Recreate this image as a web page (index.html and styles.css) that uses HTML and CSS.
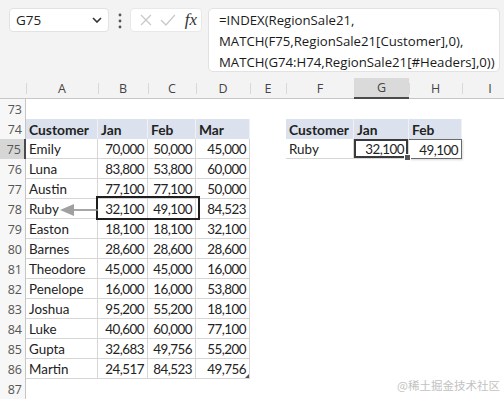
FILE: index.html
```html
<!DOCTYPE html>
<html lang="en">
<head>
    <meta charset="UTF-8">
    <title>INDEX MATCH</title>
    <link rel="stylesheet" href="styles.css">
</head>
<body>
    <div class="toolbar">
        <div class="name-box">
            <span>G75</span>
            <svg class="chevron" width="10" height="6" viewBox="0 0 10 6"><path d="M1 1 L5 5 L9 1" fill="none" stroke="#333" stroke-width="1.6"/></svg>
        </div>
        <svg class="kebab" width="4" height="16" viewBox="0 0 4 16">
            <circle cx="2" cy="2" r="1.4" fill="#555"/>
            <circle cx="2" cy="8" r="1.4" fill="#555"/>
            <circle cx="2" cy="14" r="1.4" fill="#555"/>
        </svg>
        <div class="fx-box">
            <svg width="12" height="12" viewBox="0 0 12 12"><path d="M1 1 L11 11 M11 1 L1 11" stroke="#c9c9c9" stroke-width="1.3"/></svg>
            <svg width="16" height="12" viewBox="0 0 16 12"><path d="M1 6 L6 11 L15 1" fill="none" stroke="#c9c9c9" stroke-width="1.3"/></svg>
            <span class="fx">fx</span>
        </div>
        <div class="formula">=INDEX(RegionSale21,<br>MATCH(F75,RegionSale21[Customer],0),<br>MATCH(G74:H74,RegionSale21[#Headers],0))</div>
    </div>

    <div class="sheet" id="sheet">
        <div class="range-box"></div>
        <svg class="tracer" width="40" height="14" viewBox="0 0 40 14">
            <line x1="12" y1="7" x2="38" y2="7" stroke="#8a8a8a" stroke-width="1.5"/>
            <polygon points="0,7 14,1 14,13" fill="#a0a0a0"/>
        </svg>
    </div>

    <div class="watermark">@稀土掘金技术社区</div>

    <script>
        const cols = ['A', 'B', 'C', 'D', 'E', 'F', 'G', 'H', 'I'];
        const data = {
            74: ['Customer', 'Jan', 'Feb', 'Mar', '', 'Customer', 'Jan', 'Feb', ''],
            75: ['Emily', '70,000', '50,000', '45,000', '', 'Ruby', '32,100', '49,100', ''],
            76: ['Luna', '83,800', '53,800', '60,000'],
            77: ['Austin', '77,100', '77,100', '50,000'],
            78: ['Ruby', '32,100', '49,100', '84,523'],
            79: ['Easton', '18,100', '18,100', '32,100'],
            80: ['Barnes', '28,600', '28,600', '28,600'],
            81: ['Theodore', '45,000', '45,000', '16,000'],
            82: ['Penelope', '16,000', '16,000', '53,800'],
            83: ['Joshua', '95,200', '55,200', '18,100'],
            84: ['Luke', '40,600', '60,000', '77,100'],
            85: ['Gupta', '32,683', '49,756', '55,200'],
            86: ['Martin', '24,517', '84,523', '49,756']
        };

        function cellClass(row, c) {
            let cls = 'cell';
            if (row === 74 && (c < 4 || (c > 4 && c < 8))) cls += ' hd';
            if (row >= 75 && row <= 86 && c < 4) cls += ' tb';
            if (row === 75 && c > 4 && c < 8) cls += ' tb';
            if (row === 75 && c === 6) cls += ' sel';
            if (row === 75 && c === 7) cls += ' spill';
            if (row === 86 && c === 3) cls += ' resize';
            return cls;
        }

        function renderSheet() {
            const sheet = document.getElementById('sheet');
            let html = '<div class="corner"></div>';
            cols.forEach(col => {
                html += '<div class="col-head' + (col === 'G' ? ' active' : '') + '">' + col + '</div>';
            });
            for (let row = 73; row <= 87; row++) {
                html += '<div class="row-head' + (row === 75 ? ' active' : '') + '">' + row + '</div>';
                const values = data[row] || [];
                cols.forEach((col, c) => {
                    const value = values[c] || '';
                    let cls = cellClass(row, c);
                    if (/^[\d,]+$/.test(value)) cls += ' num';
                    html += '<div class="' + cls + '">' + value + '</div>';
                });
            }
            sheet.insertAdjacentHTML('afterbegin', html);
        }

        renderSheet();
    </script>
</body>
</html>
```

FILE: styles.css
```css
body {
    margin: 0;
    width: 504px;
    height: 401px;
    overflow: hidden;
    background-color: #ffffff;
    font-family: "Open Sans", "Noto Sans", sans-serif;
    color: #222;
    position: relative;
}

.toolbar {
    height: 78px;
    box-sizing: border-box;
    background-color: #f3f3f3;
    display: flex;
    align-items: flex-start;
    padding: 8px 4px 0 9px;
}

.name-box {
    width: 100px;
    height: 24px;
    box-sizing: border-box;
    background-color: #fff;
    border: 1px solid #e2e2e2;
    border-radius: 4px;
    display: flex;
    align-items: center;
    justify-content: space-between;
    padding: 0 6px 0 6px;
    font-size: 13.5px;
}

.kebab {
    margin: 5px 8px 0 9px;
}

.fx-box {
    width: 72px;
    height: 24px;
    box-sizing: border-box;
    background-color: #fff;
    border: 1px solid #e8e8e8;
    border-radius: 4px;
    display: flex;
    align-items: center;
    gap: 8px;
    padding: 0 4px 0 9px;
}

.fx {
    font-family: "Liberation Serif", serif;
    font-style: italic;
    font-size: 17px;
    color: #333;
    margin-left: 1px;
}

.formula {
    margin-left: 6px;
    flex: 1;
    height: 64px;
    box-sizing: border-box;
    background-color: #fff;
    border: 1px solid #e2e2e2;
    border-radius: 5px;
    padding: 1px 0 0 10px;
    font-size: 13.2px;
    line-height: 21px;
    color: #1a1a1a;
    white-space: nowrap;
}

.sheet {
    position: relative;
    display: grid;
    grid-template-columns: 26px 72px 50px 48px 54px 36px 68px 55px 53px 56px;
    grid-template-rows: 21px repeat(15, 20px);
    font-family: "Lato", sans-serif;
    font-size: 13.4px;
}

.corner, .col-head {
    background-color: #f3f3f3;
    border-bottom: 1px solid #c6c6c6;
}

.col-head {
    display: flex;
    align-items: center;
    justify-content: center;
    font-family: "Open Sans", sans-serif;
    font-size: 12.5px;
    color: #444;
    position: relative;
}

.col-head::before {
    content: "";
    position: absolute;
    left: 0;
    top: 5px;
    bottom: 4px;
    border-left: 1px solid #d8d8d8;
}

.col-head.active {
    background-color: #dadada;
    border-bottom: 2px solid #4a4a4a;
}

.row-head {
    background-color: #f7f7f7;
    border-right: 1px solid #c6c6c6;
    display: flex;
    align-items: center;
    justify-content: flex-end;
    padding-right: 3px;
    font-family: "Open Sans", sans-serif;
    font-size: 12.5px;
    color: #555;
}

.row-head.active {
    background-color: #d6d6d6;
    border-right: 2px solid #4a4a4a;
}

.cell {
    display: flex;
    align-items: center;
    padding: 1px 3px 0 3px;
    white-space: nowrap;
    overflow: visible;
    box-sizing: border-box;
}

.num {
    justify-content: flex-end;
    letter-spacing: -0.5px;
}

.hd {
    background-color: #dbe2ee;
    font-weight: bold;
    font-size: 13.8px;
    border-right: 1px solid #eef1f6;
}

.tb {
    border-right: 1px solid #d6d6d6;
    border-bottom: 1px solid #d6d6d6;
}

.sel {
    position: relative;
    box-shadow: inset 0 0 0 2px #3a3a3a;
    padding-right: 4px;
}

.sel::after {
    content: "";
    position: absolute;
    right: -3px;
    bottom: -3px;
    width: 5px;
    height: 5px;
    background-color: #555;
    border: 1px solid #fff;
}

.spill {
    border: 1px solid #6a6a6a;
    border-left: none;
    box-shadow: 1px 1px 2px rgba(0, 0, 0, 0.15);
}

.resize {
    position: relative;
}

.resize::after {
    content: "";
    position: absolute;
    right: 0;
    bottom: 0;
    border-left: 4px solid transparent;
    border-bottom: 4px solid #555;
}

.range-box {
    position: absolute;
    left: 96px;
    top: 118px;
    width: 104px;
    height: 24px;
    box-sizing: border-box;
    border: 2px solid #1e1e1e;
}

.tracer {
    position: absolute;
    left: 60px;
    top: 125px;
}

.watermark {
    position: absolute;
    right: 4px;
    bottom: 8px;
    font-family: "Noto Sans CJK SC", sans-serif;
    font-size: 11.5px;
    color: #c2c2c2;
}
```
